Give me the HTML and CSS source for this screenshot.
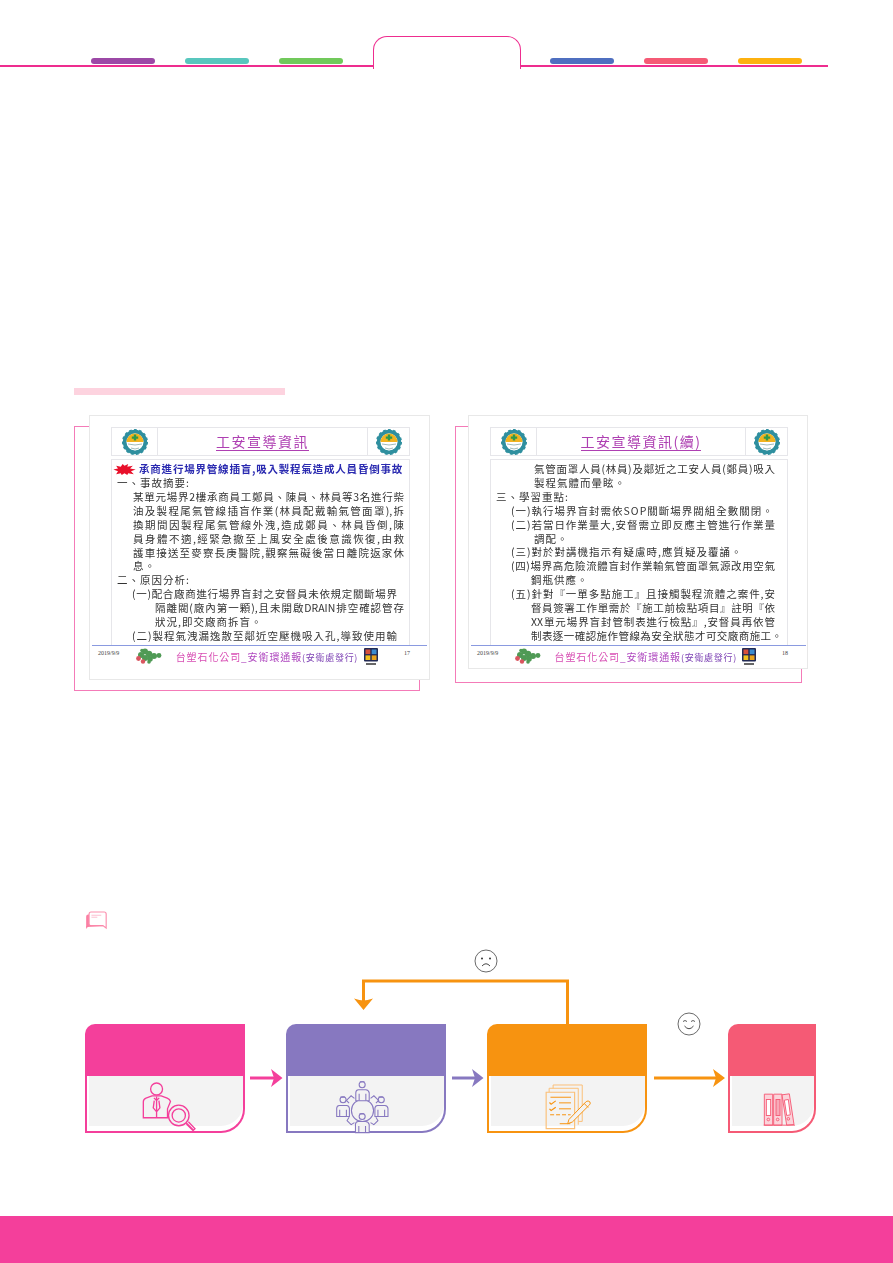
FILE: index.html
```html
<!DOCTYPE html>
<html lang="zh-Hant">
<head>
<meta charset="utf-8">
<title>工安宣導資訊</title>
<link rel="stylesheet" href="styles.css">
</head>
<body>
<svg class="defs" width="0" height="0" aria-hidden="true">
  <defs>
    <symbol id="gear" viewBox="0 0 26 26">
      <circle cx="13" cy="13" r="10.200" fill="none" stroke="#2f8f9f" stroke-width="4"/>
      <circle cx="13" cy="13" r="11.700" fill="none" stroke="#2f8f9f" stroke-width="2.600" stroke-dasharray="2.600 2.300"/>
      <circle cx="13" cy="13" r="8.500" fill="#fff"/>
      <path d="M4.500 13a8.500 8.500 0 0 1 17 0z" fill="#f2b320"/>
      <path d="M11.800 5.500h2.400v2h2v2.300h-2v1.800h-2.400V9.800h-2V7.500h2z" fill="#2f9a4a"/>
      <path d="M6 15q7 2 14 0M9 19q4 2 8 0" fill="none" stroke="#8aa" stroke-width=".8"/>
    </symbol>
    <symbol id="map" viewBox="0 0 28 16">
      <g fill="#4f9a55">
        <circle cx="6" cy="7" r="3"/><circle cx="10" cy="3.500" r="3"/><circle cx="14" cy="6" r="3.200"/>
        <circle cx="10" cy="10" r="3"/><circle cx="15" cy="11" r="2.800"/><circle cx="19" cy="8" r="3"/>
        <circle cx="24" cy="7.500" r="2.400"/><circle cx="7" cy="2.500" r="1.800"/><circle cx="14" cy="14" r="1.800"/>
      </g>
      <circle cx="3.500" cy="10.500" r="2.400" fill="#d9555f"/><circle cx="8" cy="13.500" r="2.200" fill="#d9555f"/>
    </symbol>
    <symbol id="corp" viewBox="0 0 14 18">
      <rect width="14" height="13.500" rx="1" fill="#222a55"/>
      <rect x="1.500" y="1.500" width="4.800" height="4.600" fill="#d8503a"/>
      <rect x="7.700" y="1.500" width="4.800" height="4.600" fill="#3a8bd0"/>
      <rect x="1.500" y="7.400" width="4.800" height="4.600" fill="#f2c21d"/>
      <rect x="7.700" y="7.400" width="4.800" height="4.600" fill="#e8a21d"/>
      <rect x="2" y="15" width="10" height="2" fill="#666"/>
    </symbol>
  </defs>
</svg>

<div class="page">
  <header class="topbar">
    <div class="rail rail-left">
      <span class="pill p-purple"></span><span class="pill p-teal"></span><span class="pill p-green"></span>
    </div>
    <div class="tab"></div>
    <div class="rail rail-right">
      <span class="pill p-blue"></span><span class="pill p-coral"></span><span class="pill p-amber"></span>
    </div>
  </header>

  <div class="pinkbar"></div>

  <section class="slides">
    <figure class="fig fig-a">
      <div class="slide slide-a">
        <div class="slide-head head-a">
          <div class="cell"><svg class="gear"><use href="#gear"/></svg></div>
          <div class="cell cell-title"><span class="slide-title">工安宣導資訊</span></div>
          <div class="cell"><svg class="gear"><use href="#gear"/></svg></div>
        </div>
        <div class="slide-body body-a">
          <div class="alert">
            <svg class="splash" viewBox="0 0 24 14"><path d="M0 7l5-1-2-3 5 1 2-3 2 2 4-2-1 3 6-1-3 3 6 1-5 2 3 3-6-1-1 2-3-2-3 2-1-2-5 1 2-3z" fill="#e8102a"/></svg>
            <span class="alert-text">承商進行場界管線插盲,吸入製程氣造成人員昏倒事故</span>
          </div>
          <div class="ln h">一、事故摘要:</div>
          <div class="ln b j">某單元場界2樓承商員工鄭員、陳員、林員等3名進行柴</div>
          <div class="ln b j">油及製程尾氣管線插盲作業(林員配戴輸氣管面罩),拆</div>
          <div class="ln b j">換期間因製程尾氣管線外洩,造成鄭員、林員昏倒,陳</div>
          <div class="ln b j">員身體不適,經緊急撤至上風安全處後意識恢復,由救</div>
          <div class="ln b j">護車接送至麥寮長庚醫院,觀察無礙後當日離院返家休</div>
          <div class="ln b">息。</div>
          <div class="ln h">二、原因分析:</div>
          <div class="ln s j k">(一)配合廠商進行場界盲封之安督員未依規定關斷場界</div>
          <div class="ln c j">隔離閥(廠內第一顆),且未開啟DRAIN排空確認管存</div>
          <div class="ln c">狀況,即交廠商拆盲。</div>
          <div class="ln s j k">(二)製程氣洩漏逸散至鄰近空壓機吸入孔,導致使用輸</div>
        </div>
        <div class="rule rule-a"></div>
        <div class="slide-foot">
          <span class="date">2019/9/9</span>
          <svg class="map"><use href="#map"/></svg>
          <span class="foot-title"><span class="t1">台塑石化公司</span><span class="t2">_安衛環通報</span><span class="t3">(安衛處發行)</span></span>
          <svg class="corp"><use href="#corp"/></svg>
          <span class="pageno">17</span>
        </div>
      </div>
    </figure>

    <figure class="fig fig-b">
      <div class="slide slide-b">
        <div class="slide-head head-b">
          <div class="cell"><svg class="gear"><use href="#gear"/></svg></div>
          <div class="cell cell-title"><span class="slide-title">工安宣導資訊(續)</span></div>
          <div class="cell"><svg class="gear"><use href="#gear"/></svg></div>
        </div>
        <div class="slide-body body-b">
          <div class="ln c j k">氣管面罩人員(林員)及鄰近之工安人員(鄭員)吸入</div>
          <div class="ln c">製程氣體而暈眩。</div>
          <div class="ln h">三、學習重點:</div>
          <div class="ln s">(一)執行場界盲封需依SOP關斷場界閥組全數關閉。</div>
          <div class="ln s j k">(二)若當日作業量大,安督需立即反應主管進行作業量</div>
          <div class="ln c">調配。</div>
          <div class="ln s">(三)對於對講機指示有疑慮時,應質疑及覆誦。</div>
          <div class="ln s j k">(四)場界高危險流體盲封作業輸氣管面罩氣源改用空氣</div>
          <div class="ln c2">鋼瓶供應。</div>
          <div class="ln s j k">(五)針對『一單多點施工』且接觸製程流體之案件,安</div>
          <div class="ln c2 j k">督員簽署工作單需於『施工前檢點項目』註明『依</div>
          <div class="ln c2 j k">XX單元場界盲封管制表進行檢點』,安督員再依管</div>
          <div class="ln c2 j">制表逐一確認施作管線為安全狀態才可交廠商施工。</div>
        </div>
        <div class="rule rule-b"></div>
        <div class="slide-foot">
          <span class="date">2019/9/9</span>
          <svg class="map"><use href="#map"/></svg>
          <span class="foot-title"><span class="t1">台塑石化公司</span><span class="t2">_安衛環通報</span><span class="t3">(安衛處發行)</span></span>
          <svg class="corp"><use href="#corp"/></svg>
          <span class="pageno">18</span>
        </div>
      </div>
    </figure>
  </section>

  <svg class="note" viewBox="40 28 72 64">
    <path d="M46 48q0-6 6-6h3v36h-3l-6 8z" fill="#fb7fa3"/>
    <path d="M55 40q0-6 6-6h40q6 0 6 6v43l-9-7H61q-6 0-6-6z" fill="#fff" stroke="#fb8fae" stroke-width="3.500"/>
    <path d="M62 44h30M62 50h18" stroke="#fbb3c8" stroke-width="2.500"/>
    <path d="M46 80q4-6 10-4h42" fill="#fb7fa3" stroke="#fb7fa3" stroke-width="3"/>
  </svg>

  <section class="flow">
    <svg class="loop" viewBox="0 0 216 46">
      <path d="M213.500 46V2H9.500v24" fill="none" stroke="#f79310" stroke-width="3"/>
      <path d="M0 19.500q6 2 9.500 2 3.500 0 9.500-2L9.500 31z" fill="#f79310"/>
    </svg>
    <svg class="face face-sad" viewBox="0 0 24 24">
      <circle cx="12" cy="12" r="11" fill="#fff" stroke="#444" stroke-width=".8"/>
      <circle cx="8" cy="9.500" r="1" fill="#333"/><circle cx="16" cy="9.500" r="1" fill="#333"/>
      <path d="M8 17q4-4.500 8 0" fill="none" stroke="#333" stroke-width=".9"/>
    </svg>
    <svg class="face face-smile" viewBox="0 0 24 24">
      <circle cx="12" cy="12" r="11" fill="#fff" stroke="#444" stroke-width=".8"/>
      <path d="M6 9.500q2-2 4 0M14 9.500q2-2 4 0" fill="none" stroke="#333" stroke-width=".8"/>
      <path d="M7.500 14q4.500 5.500 9 0" fill="none" stroke="#333" stroke-width=".9"/>
    </svg>

    <article class="card card-pink">
      <div class="card-top"></div>
      <div class="card-base"><div class="panel">
        <svg class="icon icon-person" viewBox="210 545 175 160" fill="none" stroke="#f43f9b" stroke-width="4">
          <circle cx="260" cy="569" r="18"/>
          <path d="M220 656v-48q0-8 8-11l18-7h28l18 7q8 3 10 10l-9 22v27z"/>
          <path d="M260 592v64M252 596l8 8 8-8M253 604l-3 22 10 12 10-12-3-22"/>
          <circle cx="327" cy="649" r="31"/><circle cx="327" cy="649" r="20"/>
          <path d="M349 671l22 22M356 668l20 21-6 6-20-20"/>
        </svg>
      </div></div>
    </article>
    <svg class="arrow arrow-short" viewBox="0 0 41 20"><path d="M5 8.500h25v3H5z" fill="#f43f9b"/><path d="M26 1l11.500 9L26 19l3-9z" fill="#f43f9b"/></svg>

    <article class="card card-purple">
      <div class="card-top"></div>
      <div class="card-base"><div class="panel">
        <svg class="icon icon-group" viewBox="795 535 170 170" fill="none" stroke="#8778c0" stroke-width="3.200">
          <circle cx="880" cy="632" r="33"/>
          <path d="M840 610l-8-8 14-14 10 8M904 596l10-8 14 14-8 8M840 652l-6 10 12 12 10-6M920 652l6 10-12 12-10-6"/>
          <circle cx="879" cy="555" r="9"/><path d="M860 603v-24q0-8 8-9h22q8 1 10 9v24z" fill="#f3f3f3"/><path d="M870 582v20M890 582v20M872 546h14"/>
          <circle cx="822" cy="600" r="9"/><path d="M803 650v-24q0-8 8-9h22q7 1 8 9v24z" fill="#f3f3f3"/><path d="M812 630v19M832 630v19M814 592h14"/>
          <circle cx="936" cy="600" r="9"/><path d="M917 650v-24q0-8 8-9h22q8 1 9 9v24z" fill="#f3f3f3"/><path d="M926 630v19M946 630v19M928 592h14"/>
          <circle cx="879" cy="650" r="9"/><path d="M859 698v-24q0-8 8-9h22q9 1 11 9v24z" fill="#f3f3f3"/><path d="M869 678v19M889 678v19M871 642h14"/>
        </svg>
      </div></div>
    </article>
    <svg class="arrow arrow-short" viewBox="0 0 41 20"><path d="M6 8.500h25v3H6z" fill="#8778c0"/><path d="M26 1l11.500 9L26 19l3-9z" fill="#8778c0"/></svg>

    <article class="card card-orange">
      <div class="card-top"></div>
      <div class="card-base"><div class="panel">
        <svg class="icon icon-doc" viewBox="280 460 150 145" fill="none" stroke="#f79310" stroke-width="3">
          <path d="M310 476v-10h88v110h-12" stroke="#fbc078"/>
          <path d="M298 488v-12h88v110" stroke="#fbc078"/>
          <path d="M289 488h86v110h-86z" stroke="#fbc078" stroke-width="3.500"/>
          <path d="M302 503h62M328 520h36M328 538h36"/>
          <path d="M299 519l5 5 14-10M299 538l5 5 14-10" stroke-width="3.500"/>
          <path d="M301 556h62" stroke-dasharray="12 6"/>
          <path d="M330 583h32"/>
          <path d="M358 570l52-54q6-4 11 1 3 5-1 9l-52 52-14 5z" fill="#f3f3f3"/>
          <path d="M404 522l12 12"/>
        </svg>
      </div></div>
    </article>
    <svg class="arrow arrow-long" viewBox="0 0 81 20"><path d="M7 8.500h62v3H7z" fill="#f79310"/><path d="M66 1l12 9-12 9 3-9z" fill="#f79310"/></svg>

    <article class="card card-coral">
      <div class="card-top"></div>
      <div class="card-base"><div class="panel">
        <svg class="icon icon-binder" viewBox="935 485 105 110" fill="none" stroke="#f55a75" stroke-width="2.800">
          <path d="M942 494h25v93h-25z" fill="#fbd3da"/>
          <rect x="948" y="510" width="13" height="48" fill="#fff"/>
          <circle cx="954" cy="570" r="4"/>
          <path d="M970 494h25v93h-25z" fill="#fbd3da"/>
          <rect x="977" y="510" width="12" height="48" fill="#f8a9b8"/>
          <circle cx="982" cy="570" r="4"/>
          <path d="M995 496l22-3 14 92-22 2z" fill="#fbd3da"/>
          <path d="M1002 512l12-2 6 46-11 2z" fill="#fff"/>
          <circle cx="1014" cy="568" r="4"/>
          <path d="M940 587h94"/>
        </svg>
      </div></div>
    </article>
  </section>

  <footer class="band"></footer>
</div>
</body>
</html>
```

FILE: styles.css
```css
* { box-sizing: border-box; }
html, body { margin: 0; padding: 0; background: #fff; }
.defs { position: absolute; }

.page {
  width: 893px;
  height: 1263px;
  display: flex;
  flex-direction: column;
  overflow: hidden;
  font-family: "Noto Sans CJK TC", "Liberation Sans", sans-serif;
}

/* top bar */
.topbar { display: flex; align-items: flex-end; margin-top: 36px; height: 33px; }
.rail { display: flex; gap: 30px; height: 10px; border-bottom: 2.500px solid #ee2d8f; margin-bottom: 2px; }
.rail-left { width: 373px; padding-left: 91px; }
.rail-right { width: 307px; padding-left: 29px; }
.tab {
  width: 148px;
  height: 33px;
  border: 1.500px solid #ee2d8f;
  border-bottom: 0;
  border-radius: 14px 14px 0 0;
}
.pill { width: 64px; height: 5.500px; border-radius: 3px; margin-top: 1px; }
.p-purple { background: #9c48a6; }
.p-teal { background: #58c7be; }
.p-green { background: #71c95b; }
.p-blue { background: #4f6fc0; }
.p-coral { background: #f55a75; }
.p-amber { background: #fdb10f; }

.pinkbar { width: 211px; height: 7px; margin: 319px 0 0 74px; background: #fdd3df; }

/* slides */
.slides { display: flex; align-items: flex-start; gap: 25px; margin: 20px 0 0 74px; }
.fig { position: relative; margin: 0; }
.fig::before {
  content: "";
  position: absolute;
  left: 0;
  top: 11px;
  bottom: 0;
  border: 1px solid #f47bb8;
}
.fig-a { width: 356px; padding: 0 0 11px 15px; }
.fig-a::before { right: 10px; }
.fig-b { width: 353px; padding: 0 0 14px 13px; }
.fig-b::before { right: 6px; }

.slide {
  position: relative;
  background: #fff;
  border: 1px solid #e8e8e8;
  padding: 11px 19px 0 21px;
  overflow: hidden;
}
.slide-a { width: 341px; height: 265px; }
.slide-b { width: 340px; height: 254px; }

.slide-head {
  display: grid;
  height: 29px;
  border: 1px solid #e6e6ea;
  filter: blur(.25px);
}
.head-a { grid-template-columns: 45px 1fr 42px; }
.head-b { grid-template-columns: 45px 1fr 42px; }
.cell { display: flex; align-items: center; justify-content: center; }
.cell + .cell { border-left: 1px solid #e6e6ea; }
.gear { width: 26px; height: 26px; }
.slide-title {
  color: #ae3fb2;
  font-size: 14px;
  line-height: 18px;
  letter-spacing: 1.500px;
  border-bottom: 1.500px solid #ae3fb2;
}

.slide-body {
  height: 186px;
  margin-top: 3px;
  padding: 2px 5px 0 0;
  border: 1px solid #e6e6ea;
  border-bottom: 0;
  overflow: hidden;
  color: #333;
  font-size: 10.500px;
  line-height: 13.900px;
  letter-spacing: 1px;
  filter: blur(.3px);
}
.ln { white-space: nowrap; }
.j { white-space: normal; letter-spacing: 0; text-align: justify; text-align-last: justify; }
.k { padding-right: 7px; }
.h { padding-left: 5px; }
.b { padding-left: 21px; }
.s { padding-left: 20px; }
.c { padding-left: 43px; }
.c2 { padding-left: 40px; }
.alert { display: flex; align-items: center; height: 14px; color: #2a2ab0; font-weight: 700; }
.alert-text { margin-left: 3px; letter-spacing: .8px; font-size: 10.500px; white-space: nowrap; }
.splash { width: 23px; height: 13px; flex: none; margin-left: 1px; }

.rule { height: 1px; background: #8a9ae0; margin-left: -19px; }
.rule-a { width: 335px; }
.rule-b { width: 335px; }

.slide-foot { display: flex; align-items: flex-start; margin: 2px 0 0 -13px; }
.date { width: 38px; font: 6px/10px "Liberation Serif", serif; color: #444; }
.map { width: 28px; height: 16px; flex: none; filter: blur(.3px); }
.foot-title { width: 195px; margin-left: 13px; font-size: 10px; line-height: 18px; letter-spacing: .9px; white-space: nowrap; filter: blur(.25px); }
.t1 { color: #d84fb4; }
.t2 { color: #b04ac0; }
.t3 { color: #7f45b5; font-size: 9px; letter-spacing: .7px; }
.corp { width: 14px; height: 18px; flex: none; }
.pageno { margin-left: 26px; font: 6px/10px "Liberation Serif", serif; color: #444; }

/* note */
.note { width: 24px; height: 21px; flex: none; margin: 219px 0 0 84px; }

/* flow */
.flow {
  position: relative;
  display: flex;
  align-items: flex-start;
  margin: 93px 0 0 85px;
}
.loop { position: absolute; left: 269px; top: -45px; width: 216px; height: 46px; }
.face { position: absolute; width: 24px; height: 24px; }
.face-sad { left: 389px; top: -75px; }
.face-smile { left: 592px; top: -12px; }

.card { width: 160px; height: 109px; flex: none; --tone: #000; display: flex; flex-direction: column; }
.card-pink { --tone: #f43f9b; }
.card-purple { --tone: #8778c0; }
.card-orange { --tone: #f79310; }
.card-coral { --tone: #f55a75; width: 88px; }
.card-top { height: 52px; background: var(--tone); border-radius: 10px 0 0 0; }
.card-base {
  flex: 1;
  border: 2px solid var(--tone);
  border-top: 0;
  border-radius: 0 0 24px 0;
  padding-left: 2px;
}
.panel {
  position: relative;
  height: 50px;
  background: #f3f3f3;
  border-radius: 0 0 22px 0;
}
.icon { position: absolute; display: block; }
.icon-person { width: 58px; height: 53px; left: 51px; top: 5px; }
.icon-group { width: 57px; height: 57px; left: 44px; top: 2px; }
.icon-doc { width: 50px; height: 48px; left: 52px; top: 7px; }
.icon-binder { width: 35px; height: 37px; left: 30px; top: 15px; }

.arrow { flex: none; height: 20px; margin-top: 44px; }
.arrow-short { width: 41px; }
.arrow-long { width: 81px; }

.band { margin-top: auto; height: 47px; background: #f43f9b; }
```
